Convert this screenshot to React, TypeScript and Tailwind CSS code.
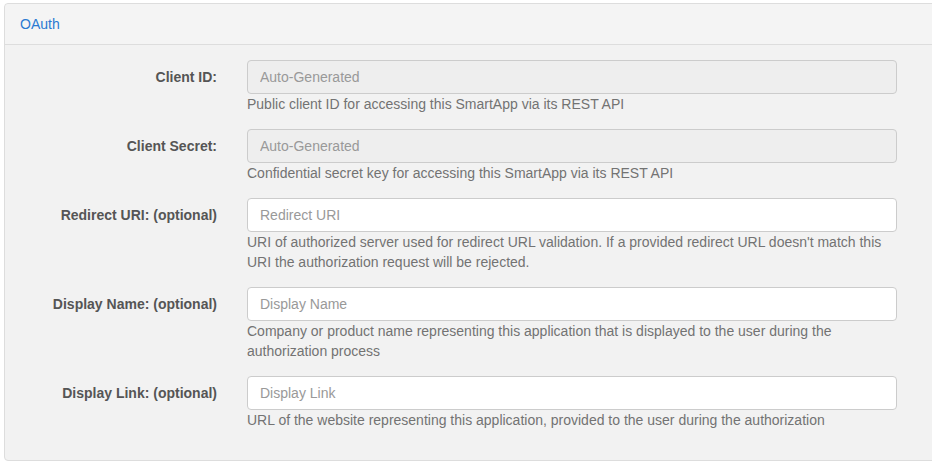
import React from "react";

interface Field {
  label: string;
  placeholder: string;
  disabled?: boolean;
  help: string;
}

const FIELDS: Field[] = [
  {
    label: "Client ID:",
    placeholder: "Auto-Generated",
    disabled: true,
    help: "Public client ID for accessing this SmartApp via its REST API",
  },
  {
    label: "Client Secret:",
    placeholder: "Auto-Generated",
    disabled: true,
    help: "Confidential secret key for accessing this SmartApp via its REST API",
  },
  {
    label: "Redirect URI: (optional)",
    placeholder: "Redirect URI",
    help: "URI of authorized server used for redirect URL validation. If a provided redirect URL doesn't match this URI the authorization request will be rejected.",
  },
  {
    label: "Display Name: (optional)",
    placeholder: "Display Name",
    help: "Company or product name representing this application that is displayed to the user during the authorization process",
  },
  {
    label: "Display Link: (optional)",
    placeholder: "Display Link",
    help: "URL of the website representing this application, provided to the user during the authorization",
  },
];

export default function App() {
  return (
    <div
      className="w-[932px] h-[463px] bg-white pt-[3px] pl-[4px] overflow-hidden"
      style={{ fontFamily: '"Liberation Sans", Arial, sans-serif' }}
    >
      {/* Panel */}
      <div className="w-[940px] h-[458px] border border-[#dddddd] rounded-[4px] bg-[#f2f2f2]">
        {/* Header */}
        <div className="h-[41px] px-[15px] flex items-center border-b border-[#dddddd] bg-[#f4f4f4] rounded-t-[4px]">
          <span className="text-[14px] text-[#2a7ad2]">OAuth</span>
        </div>

        {/* Form */}
        <div className="pt-[15px] flex flex-col">
          {FIELDS.map((f) => (
            <div key={f.label} className="flex mb-[15px]">
              <label className="w-[212px] shrink-0 text-right pt-[7px] text-[14px] font-bold text-[#555555] leading-[20px]">
                {f.label}
              </label>
              <div className="ml-[30px] w-[650px]">
                <input
                  disabled={f.disabled}
                  placeholder={f.placeholder}
                  className={
                    "block w-full h-[34px] px-[12px] rounded-[4px] border border-[#cccccc] text-[14px] text-[#555555] placeholder:text-[#999999] outline-none " +
                    (f.disabled ? "bg-[#eeeeee]" : "bg-white")
                  }
                />
                <p className="text-[14px] leading-[20px] text-[#737373]">{f.help}</p>
              </div>
            </div>
          ))}
        </div>
      </div>
    </div>
  );
}
